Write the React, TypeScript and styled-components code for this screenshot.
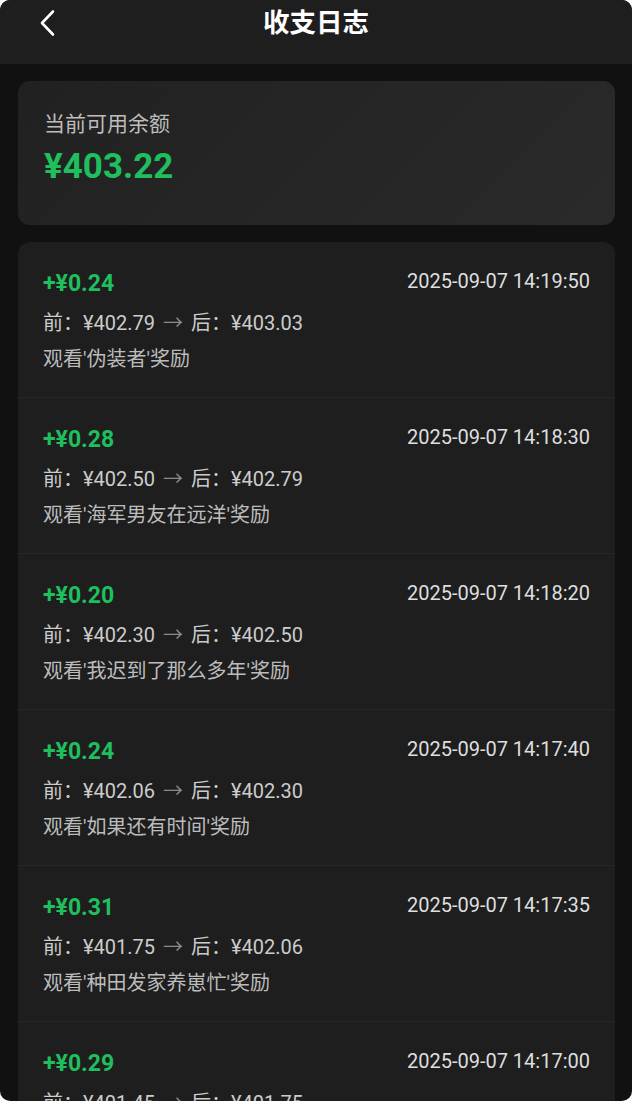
import React from "react";
import styled, { createGlobalStyle } from "styled-components";

const GlobalStyle = createGlobalStyle`
  html, body {
    margin: 0;
    padding: 0;
    background: #ffffff;
  }
  body {
    font-family: Roboto, "Noto Sans CJK SC", sans-serif;
  }
`;

const Screen = styled.div`
  width: 632px;
  height: 1101px;
  background: #111111;
  border-radius: 10px;
  overflow: hidden;
  display: flex;
  flex-direction: column;
`;

const Header = styled.header`
  height: 64px;
  flex: 0 0 64px;
  box-sizing: border-box;
  padding-bottom: 18px;
  background: #1e1e1e;
  position: relative;
  display: flex;
  align-items: center;
  justify-content: center;
`;

const BackButton = styled.button`
  position: absolute;
  left: 34px;
  top: 8px;
  width: 30px;
  height: 30px;
  padding: 0;
  border: none;
  background: transparent;
  display: flex;
  align-items: center;
  justify-content: center;
`;

const Title = styled.h1`
  margin: 0;
  color: #ffffff;
  font-size: 26.5px;
  font-weight: 700;
  line-height: 46px;
`;

const Body = styled.main`
  padding: 17px 17px 0 18px;
  display: flex;
  flex-direction: column;
  gap: 17px;
`;

const BalanceCard = styled.section`
  height: 144px;
  box-sizing: border-box;
  border-radius: 12px;
  background: linear-gradient(135deg, #212121 0%, #2a2a2a 100%);
  padding: 28px 26px;
  display: flex;
  flex-direction: column;
`;

const BalanceLabel = styled.div`
  color: #bdbdbd;
  font-size: 21px;
  line-height: 30px;
`;

const BalanceValue = styled.div`
  color: #1fbf5e;
  font-size: 35px;
  font-weight: 700;
  line-height: 44px;
  margin-top: 6px;
`;

const LogList = styled.section`
  border-radius: 12px;
  background: #1e1e1e;
  overflow: hidden;
`;

const LogItem = styled.div`
  padding: 27px 25px 24px;
  border-bottom: 1px solid #272727;
  display: flex;
  flex-direction: column;
`;

const TopRow = styled.div`
  display: flex;
  justify-content: space-between;
  align-items: flex-start;
`;

const Amount = styled.span`
  color: #1fbf5e;
  font-size: 23px;
  font-weight: 700;
  line-height: 30px;
`;

const Time = styled.span`
  color: #dedede;
  font-size: 20px;
  line-height: 24px;
`;

const Detail = styled.div`
  color: #cccccc;
  font-size: 20px;
  line-height: 28px;
  margin-top: 10px;
`;

const Arrow = styled.span`
  color: #8a8a8a;
  margin: 0 8px;
`;

const Description = styled.div`
  color: #bcbcbc;
  font-size: 20px;
  line-height: 28px;
  margin-top: 8px;
`;

type Log = {
  amount: string;
  time: string;
  before: string;
  after: string;
  title: string;
};

const logs: Log[] = [
  { amount: "0.24", time: "2025-09-07 14:19:50", before: "402.79", after: "403.03", title: "伪装者" },
  { amount: "0.28", time: "2025-09-07 14:18:30", before: "402.50", after: "402.79", title: "海军男友在远洋" },
  { amount: "0.20", time: "2025-09-07 14:18:20", before: "402.30", after: "402.50", title: "我迟到了那么多年" },
  { amount: "0.24", time: "2025-09-07 14:17:40", before: "402.06", after: "402.30", title: "如果还有时间" },
  { amount: "0.31", time: "2025-09-07 14:17:35", before: "401.75", after: "402.06", title: "种田发家养崽忙" },
  { amount: "0.29", time: "2025-09-07 14:17:00", before: "401.45", after: "401.75", title: "逆袭人生" },
];

function ChevronLeft() {
  return (
    <svg width="22" height="28" viewBox="0 0 22 28" fill="none">
      <polyline
        points="15,2.5 4,14 15,25.5"
        stroke="#ffffff"
        strokeWidth="2.6"
        strokeLinecap="round"
        strokeLinejoin="round"
      />
    </svg>
  );
}

export default function App() {
  return (
    <>
      <GlobalStyle />
      <Screen>
        <Header>
          <BackButton aria-label="返回">
            <ChevronLeft />
          </BackButton>
          <Title>收支日志</Title>
        </Header>
        <Body>
          <BalanceCard>
            <BalanceLabel>当前可用余额</BalanceLabel>
            <BalanceValue>¥403.22</BalanceValue>
          </BalanceCard>
          <LogList>
            {logs.map((log, i) => (
              <LogItem key={i}>
                <TopRow>
                  <Amount>+¥{log.amount}</Amount>
                  <Time>{log.time}</Time>
                </TopRow>
                <Detail>
                  前：¥{log.before}
                  <Arrow>→</Arrow>
                  后：¥{log.after}
                </Detail>
                <Description>观看'{log.title}'奖励</Description>
              </LogItem>
            ))}
          </LogList>
        </Body>
      </Screen>
    </>
  );
}
